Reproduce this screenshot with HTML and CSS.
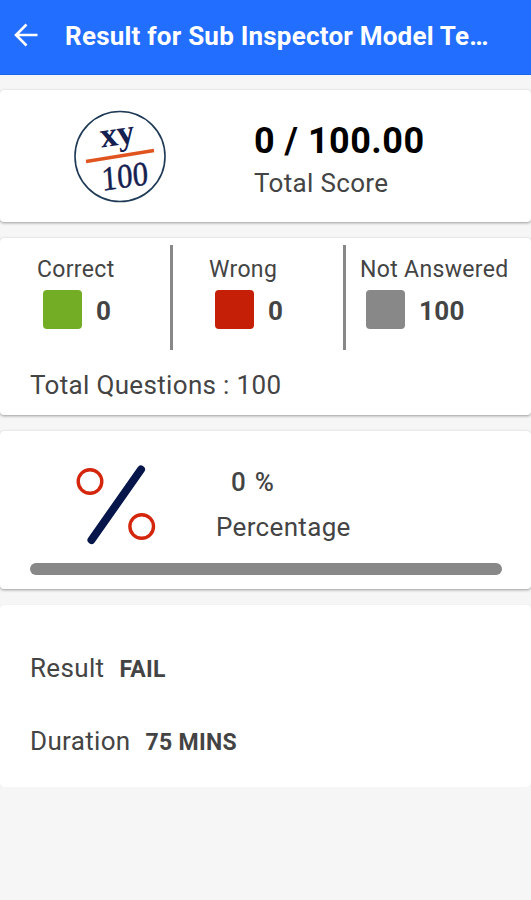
FILE: index.html
```html
<!DOCTYPE html>
<html lang="en">
<head>
    <meta charset="UTF-8">
    <meta name="viewport" content="width=device-width, initial-scale=1.0">
    <title>Test Result</title>
    <link rel="stylesheet" href="styles.css">
</head>
<body>
    <header class="header">
        <svg class="back" width="24" height="24" viewBox="0 0 24 24">
            <path d="M23.5 12H2M12.5 1.5L2 12l10.5 10.5" fill="none" stroke="#fff" stroke-width="2.6"/>
        </svg>
        <h1 class="title">Result for Sub Inspector Model Te…</h1>
    </header>

    <div class="card score-card">
        <svg class="score-icon" width="94" height="94" viewBox="0 0 94 94">
            <circle cx="47" cy="46.5" r="45" fill="none" stroke="#1f3a56" stroke-width="1.6"/>
            <g transform="rotate(-8 47 47)" fill="#14204f" font-family="Liberation Serif, serif" text-anchor="middle">
                <text x="47.5" y="35" font-size="35" font-weight="bold" textLength="35">xy</text>
                <text transform="translate(48.5 78) skewX(-4)" font-size="34" textLength="47" lengthAdjust="spacingAndGlyphs" stroke="#14204f" stroke-width="0.5">100</text>
            </g>
            <path d="M13 51.5L81 40.5" stroke="#e0541f" stroke-width="3.4"/>
        </svg>
        <div class="score-text">
            <div class="score">0 / 100.00</div>
            <div class="score-label">Total Score</div>
        </div>
    </div>

    <div class="card count-card">
        <div class="counts">
            <div class="count">
                <div class="count-label">Correct</div>
                <div class="count-value"><span class="box green"></span><b>0</b></div>
            </div>
            <div class="count wrong">
                <div class="count-label">Wrong</div>
                <div class="count-value"><span class="box red"></span><b>0</b></div>
            </div>
            <div class="count skipped">
                <div class="count-label">Not Answered</div>
                <div class="count-value"><span class="box gray"></span><b>100</b></div>
            </div>
        </div>
        <div class="total">Total Questions : 100</div>
    </div>

    <div class="card percent-card">
        <div class="percent-row">
            <svg class="percent-icon" width="82" height="82" viewBox="0 0 82 82">
                <g fill="none" stroke="#d3260c" stroke-width="3.4">
                    <circle cx="15" cy="17.5" r="11.8"/>
                    <circle cx="66.7" cy="62.5" r="11.8"/>
                </g>
                <path d="M66 5.5L16.5 76" stroke="#06164a" stroke-width="8" stroke-linecap="round"/>
            </svg>
            <div class="percent-text">
                <div class="percent">0 %</div>
                <div class="percent-label">Percentage</div>
            </div>
        </div>
        <div class="bar"></div>
    </div>

    <div class="card info-card">
        <div class="info"><span>Result</span><b>FAIL</b></div>
        <div class="info"><span>Duration</span><b>75 MINS</b></div>
    </div>
</body>
</html>
```
FILE: styles.css
```css
body {
  font-family: Roboto, sans-serif;
  margin: 0;
  background: #f6f6f6;
  color: #444;
  font-size: 26px;
  line-height: 32px;
  letter-spacing: 0.33px;
}

.header {
  display: flex;
  align-items: center;
  height: 75px;
  box-sizing: border-box;
  padding: 0 14px 5px;
  background: #226eff;
  border-bottom: 1px solid #1a67e8;
}

.title {
  margin: 2px 0 0 27px;
  color: #fff;
  font-size: 26px;
  font-weight: bold;
  letter-spacing: 0.22px;
  white-space: nowrap;
}

.card {
  box-sizing: border-box;
  background: #fff;
  border-radius: 4px;
  box-shadow: 0 1px 3px rgba(0, 0, 0, 0.38);
}

.score-card {
  display: flex;
  height: 132px;
  margin-top: 15px;
  padding: 20px 0 0 73px;
}

.score-text {
  margin-left: 87px;
  padding-top: 8px;
}

.score {
  color: #000;
  font-size: 36px;
  font-weight: bold;
  line-height: 46px;
  letter-spacing: 0.5px;
}

.score-label {
  line-height: 38px;
}

.count-card {
  height: 177px;
  margin-top: 16px;
  padding: 7px 0 0;
}

.counts {
  display: flex;
  height: 105px;
}

.count {
  width: 170px;
  box-sizing: border-box;
  padding: 9px 0 0 37px;
}

.wrong,
.skipped {
  width: 173px;
  padding-left: 36px;
  border-left: 3px solid #888;
}

.skipped {
  width: 188px;
  padding-left: 14px;
}

.count-label {
  font-size: 23px;
  white-space: nowrap;
}

.count-value {
  display: flex;
  align-items: center;
  gap: 14px;
  margin: 4px 0 0 6px;
}

.count-value b {
  padding-top: 2px;
}

.box {
  width: 39px;
  height: 39px;
  border-radius: 4px;
}

.green {
  background: #73ad25;
}

.red {
  background: #c51f08;
}

.gray {
  background: #888;
}

.total {
  margin: 19px 0 0 30px;
}

.percent-card {
  height: 158px;
  margin-top: 16px;
  padding: 33px 29px 0 30px;
}

.percent-row {
  display: flex;
  height: 99px;
  margin-left: 45px;
}

.percent-text {
  margin-left: 59px;
}

.percent {
  margin: 2px 0 13px 15px;
  font-weight: 500;
  letter-spacing: 1.2px;
}

.bar {
  height: 12px;
  border-radius: 6px;
  background: #888;
}

.info-card {
  height: 182px;
  margin-top: 16px;
  padding: 47px 30px 0;
  box-shadow: 0 0 1px rgba(0, 0, 0, 0.12);
}

.info {
  display: flex;
  align-items: baseline;
  gap: 15px;
  height: 32px;
  margin-bottom: 41px;
}

.info b {
  font-size: 23px;
  letter-spacing: 0.3px;
}
```
